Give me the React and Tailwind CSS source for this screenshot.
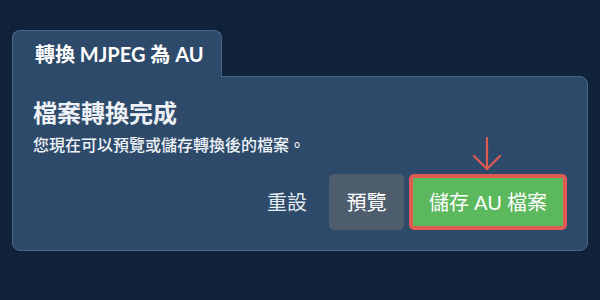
import React from "react";

export default function App() {
  const font = { fontFamily: '"Lato", "Noto Sans CJK TC", sans-serif' };
  return (
    <div className="w-[600px] h-[300px] bg-[#10223a] pt-[30px] px-[12px]" style={font}>
      <div className="flex flex-col w-[576px]">
        <div className="w-[210px] h-[47px] bg-[#2d4a6a] border border-b-0 border-[#4b6888] rounded-t-lg flex items-center pl-[22px] relative z-10 -mb-px">
          <span className="text-[20px] font-bold text-white leading-none">轉換 MJPEG 為 AU</span>
        </div>
        <div className="h-[175px] bg-[#2d4a6a] border border-[#4b6888] rounded-b-lg rounded-tr-lg px-[20px] pt-[21px] flex flex-col">
          <h2 className="text-[24px] font-semibold text-[#eef2f6] leading-[30px]">檔案轉換完成</h2>
          <p className="text-[16px] font-medium text-[#eef2f6] leading-[22px] mt-[6px]">您現在可以預覽或儲存轉換後的檔案。</p>
          <div className="flex justify-end items-center mt-[18px]">
            <button className="text-[20px] text-[#e6ebf0] px-[3px] mr-[19px]">重設</button>
            <button className="w-[75px] h-[56px] rounded-[5px] bg-[#4f5e6f] text-[20px] text-white mr-[5px]">預覽</button>
            <div className="relative">
              <svg className="absolute left-[63px] -top-[38px]" width="32" height="36" viewBox="0 0 32 36" fill="none" stroke="#e05a52" strokeWidth="2.2" strokeLinecap="round" strokeLinejoin="round">
                <path d="M15 2 V33" />
                <path d="M2 20 L15 33 L28 20" />
              </svg>
              <button className="w-[158px] h-[56px] rounded-[5px] bg-[#5cb85c] border-[4px] border-[#e05a52] text-[20px] text-white">儲存 AU 檔案</button>
            </div>
          </div>
        </div>
      </div>
    </div>
  );
}
